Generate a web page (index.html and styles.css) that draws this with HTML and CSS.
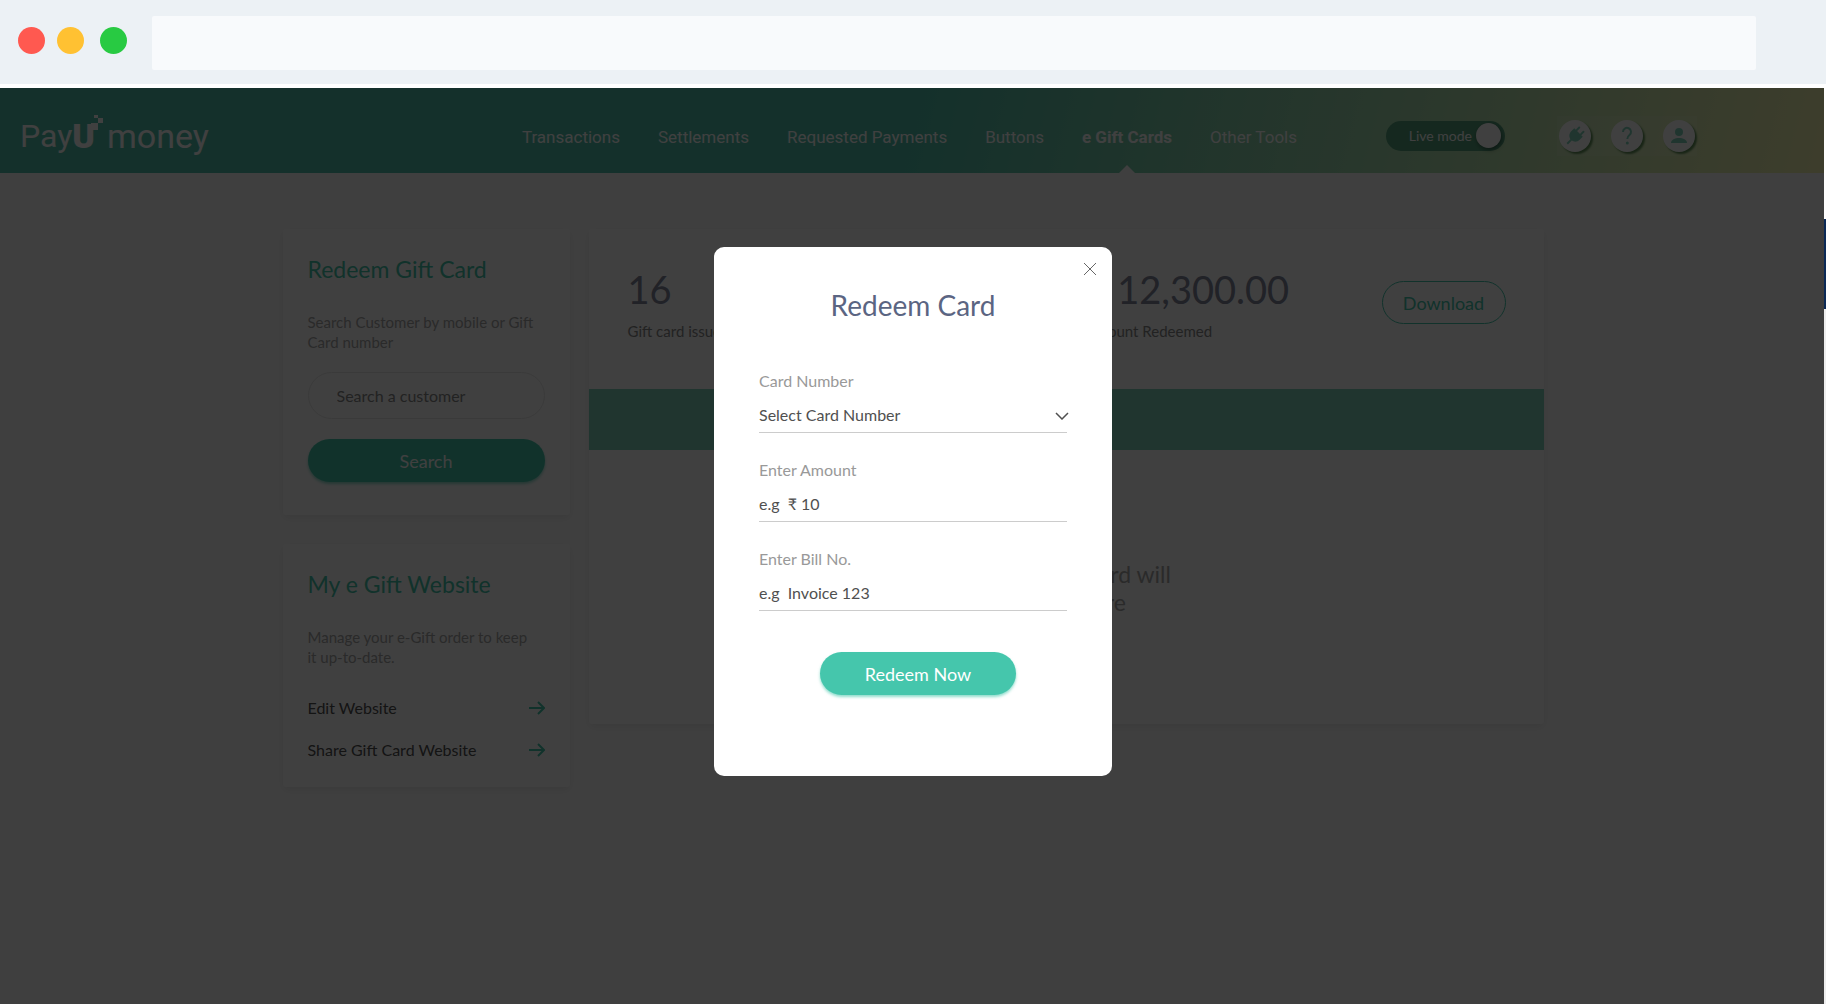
FILE: index.html
```html
<!DOCTYPE html>
<html lang="en">
<head>
    <meta charset="UTF-8">
    <meta name="viewport" content="width=device-width, initial-scale=1.0">
    <title>PayUmoney - e Gift Cards</title>
    <link rel="stylesheet" href="styles.css">
</head>
<body>
    <div class="browser-bar">
        <span class="dot red"></span>
        <span class="dot yellow"></span>
        <span class="dot green"></span>
        <input class="address" type="text" aria-label="Address">
    </div>

    <div class="page">
        <header class="header">
            <a class="logo" href="#" aria-label="PayUmoney">
                <span>Pay</span><span class="logo-u">U</span>
                <svg class="logo-bits" width="12" height="42" viewBox="0 0 12 42">
                    <rect x="3" y="0" width="4" height="3"/>
                    <rect x="7" y="3" width="5" height="5"/>
                    <rect x="0" y="8" width="7" height="7"/>
                </svg>
                <span class="logo-money">money</span>
            </a>
            <nav class="nav">
                <a href="#">Transactions</a>
                <a href="#">Settlements</a>
                <a href="#">Requested Payments</a>
                <a href="#">Buttons</a>
                <a href="#" class="active">e Gift Cards</a>
                <a href="#">Other Tools</a>
            </nav>
            <label class="mode">
                Live mode
                <input type="checkbox" checked>
                <span class="knob"></span>
            </label>
            <div class="tools">
                <button class="tool" aria-label="Integrations">
                    <svg width="20" height="20" viewBox="0 0 20 20">
                        <g transform="rotate(45 10 10)">
                            <rect x="6" y="0" width="2" height="6" rx="1"/>
                            <rect x="12" y="0" width="2" height="6" rx="1"/>
                            <path d="M4 5h12v4c0 4-2.500 6-5 6.500V21H9v-5.500C6.500 15 4 13 4 9z"/>
                        </g>
                    </svg>
                </button>
                <button class="tool" aria-label="Help">
                    <svg width="20" height="20" viewBox="0 0 20 20">
                        <path class="line" d="M6 6a4 4 0 1 1 6.500 3c-1.500 1.200-2.200 2-2.200 4"/>
                        <circle cx="10.300" cy="17" r="1.500"/>
                    </svg>
                </button>
                <button class="tool" aria-label="Account">
                    <svg width="20" height="20" viewBox="0 0 20 20">
                        <circle cx="10" cy="6" r="4"/>
                        <path d="M2 17c0-3.500 4-5 8-5s8 1.500 8 5z"/>
                    </svg>
                </button>
            </div>
        </header>

        <main class="content">
            <aside class="side">
                <section class="card">
                    <h2>Redeem Gift Card</h2>
                    <p>Search Customer by mobile or Gift Card number</p>
                    <input class="search-input" type="text" placeholder="Search a customer" aria-label="Search a customer">
                    <button class="btn">Search</button>
                </section>
                <section class="card website">
                    <h2>My e Gift Website</h2>
                    <p>Manage your e-Gift order to keep it up-to-date.</p>
                    <a class="site-link" href="#">
                        Edit Website
                        <svg width="16" height="14" viewBox="0 0 16 14"><path d="M0 7h15M9 1l6 6-6 6"/></svg>
                    </a>
                    <a class="site-link" href="#">
                        Share Gift Card Website
                        <svg width="16" height="14" viewBox="0 0 16 14"><path d="M0 7h15M9 1l6 6-6 6"/></svg>
                    </a>
                </section>
            </aside>
            <section class="card summary">
                <div class="stats">
                    <div class="stat">
                        <strong>16</strong>
                        <span>Gift card issued</span>
                    </div>
                    <div class="stat">
                        <strong>₹ 12,300.00</strong>
                        <span>Amount Redeemed</span>
                    </div>
                    <button class="download">Download</button>
                </div>
                <div class="band"></div>
                <p class="empty">Issued e gift card will<br>appear here</p>
            </section>
        </main>

        <div class="overlay">
            <form class="modal" role="dialog" aria-labelledby="modalTitle">
                <button class="close" type="button" aria-label="Close">
                    <svg width="14" height="14" viewBox="0 0 14 14"><path d="M1 1l12 12M13 1L1 13"/></svg>
                </button>
                <h1 id="modalTitle">Redeem Card</h1>
                <div class="field">
                    <label for="cardNumber">Card Number</label>
                    <select id="cardNumber">
                        <option>Select Card Number</option>
                    </select>
                    <svg class="chevron" width="14" height="8" viewBox="0 0 14 8"><path d="M1 1l6 6 6-6"/></svg>
                </div>
                <div class="field">
                    <label for="amount">Enter Amount</label>
                    <input type="text" id="amount" placeholder="e.g&nbsp; ₹ 10">
                </div>
                <div class="field">
                    <label for="bill">Enter Bill No.</label>
                    <input type="text" id="bill" placeholder="e.g&nbsp; Invoice 123">
                </div>
                <button class="btn redeem" type="submit">Redeem Now</button>
            </form>
        </div>
    </div>
    <div class="edge"></div>
</body>
</html>
```
FILE: styles.css
```css
* {
    box-sizing: border-box;
}
body {
    margin: 0;
    font-family: Lato, sans-serif;
    font-size: 16px;
    background: #fff;
    position: relative;
}
button, input, select {
    font-family: inherit;
    font-size: inherit;
}
a {
    text-decoration: none;
    color: inherit;
}

/* browser bar */
.browser-bar {
    display: flex;
    align-items: center;
    height: 84px;
    padding: 2px 70px 0 18px;
    background: #ecf1f5;
}
.dot {
    width: 27px;
    height: 27px;
    margin: 0 16px 6px 0;
    border-radius: 50%;
}
.red {
    background: #ff5950;
    margin-right: 12px;
}
.yellow {
    background: #ffc132;
}
.green {
    background: #28ca42;
    margin-right: 25px;
}
.address {
    flex: 1;
    height: 54px;
    border: none;
    border-radius: 2px;
    background: #f8fafc;
}

.page {
    position: relative;
    margin-top: 4px;
    min-height: calc(100vh - 88px);
    background: #fcfcfc;
}

/* sliver of the window behind */
.edge {
    position: absolute;
    right: 0;
    top: 84px;
    bottom: 0;
    width: 2px;
    background: linear-gradient(#fff 135px, #0c2a56 135px, #0c2a56 225px, #eee 225px);
}

/* header */
.header {
    display: flex;
    align-items: center;
    height: 85px;
    padding: 0 129px 0 20px;
    background: linear-gradient(105deg, #50c0ac 50%, #f4f4b0 100%);
}
.logo {
    display: flex;
    align-items: center;
    margin-right: auto;
    margin-top: 10px;
    font-family: Roboto, sans-serif;
    font-size: 32px;
    font-weight: 400;
    color: #fff;
}
.logo-u {
    font-size: 34px;
    font-weight: 900;
}
.logo-bits {
    fill: #fff;
    margin-left: -4px;
}
.logo-money {
    font-size: 34px;
    margin-left: 4px;
}
.nav {
    display: flex;
    gap: 38px;
    margin-right: 89px;
    font-family: Roboto, sans-serif;
    font-size: 17px;
    color: #fff;
}
.nav a {
    position: relative;
    line-height: 85px;
    padding-top: 7px;
    height: 85px;
}
.nav .active {
    font-weight: 700;
}
.nav .active::after {
    content: "";
    position: absolute;
    left: calc(50% - 8px);
    bottom: 0;
    border: 8px solid transparent;
    border-top: none;
    border-bottom-color: #fcfcfc;
}
.mode {
    display: flex;
    align-items: center;
    justify-content: flex-end;
    gap: 4px;
    width: 119px;
    height: 30px;
    padding-right: 4px;
    margin-right: 52px;
    border-radius: 15px;
    background: #54a07c;
    color: #fff;
    font-size: 14px;
    margin-top: 10px;
}
.mode input {
    position: absolute;
    opacity: 0;
}
.knob {
    width: 25px;
    height: 25px;
    border-radius: 50%;
    background: #fff;
    box-shadow: 1px 2px 4px rgba(0, 0, 0, 0.4);
}
.tools {
    display: flex;
    align-items: center;
    gap: 20px;
    height: 40px;
    padding: 0 2px;
    margin-top: 10px;
    background: rgba(255, 255, 255, 0.1);
}
.tool {
    display: flex;
    align-items: center;
    justify-content: center;
    width: 32px;
    height: 32px;
    padding: 0;
    border: none;
    border-radius: 50%;
    background: #fff;
    box-shadow: 2px 2px 2px #5f8f57;
}
.tool svg {
    fill: #80d4bc;
}
.tool .line {
    fill: none;
    stroke: #80d4bc;
    stroke-width: 2;
}

/* content */
.content {
    display: grid;
    grid-template-columns: 287px 1fr;
    align-items: start;
    gap: 19px;
    max-width: 1261px;
    margin: 0 auto;
    padding-top: 56px;
}
.side {
    display: grid;
    gap: 29px;
}
.card {
    padding: 25px;
    border-radius: 3px;
    background: #fff;
    box-shadow: 0 3px 8px rgba(0, 0, 0, 0.08);
}
.card h2 {
    margin: 0 0 28px;
    font-size: 23px;
    line-height: 30px;
    font-weight: 400;
    color: #45c6ac;
}
.card p {
    margin: 0 0 20px;
    padding-right: 8px;
    font-size: 15px;
    line-height: 20px;
    color: #a8a8a8;
}
.search-input {
    display: block;
    width: 100%;
    height: 47px;
    padding: 0 28px;
    margin-bottom: 20px;
    border: 1px solid #e8e8e8;
    border-radius: 24px;
    background: #fff;
}
.search-input::placeholder {
    color: #888;
}
.btn {
    display: block;
    width: 100%;
    height: 43px;
    border: none;
    border-radius: 22px;
    background: #45c6ac;
    color: #fff;
    font-size: 18px;
    box-shadow: 0 2px 3px rgba(69, 198, 172, 0.6);
}
.card > .btn {
    margin-bottom: 8px;
}
.website {
    padding-bottom: 16px;
}
.site-link {
    display: flex;
    justify-content: space-between;
    align-items: center;
    line-height: 42px;
    color: #505050;
}
.site-link svg {
    fill: none;
    stroke: #45c6ac;
    stroke-width: 2;
}
.summary {
    padding: 0;
    min-height: 495px;
}
.stats {
    display: grid;
    grid-template-columns: 458px 1fr auto;
    align-items: start;
    height: 160px;
    padding: 36px 38px 0 39px;
}
.stat {
    display: grid;
    gap: 6px;
    color: #888;
    font-size: 15px;
    line-height: 24px;
}
.stat strong {
    font-size: 38px;
    line-height: 48px;
    font-weight: 400;
    color: #82869c;
}
.download {
    width: 124px;
    height: 43px;
    margin-top: 16px;
    border: 1px solid #45c6ac;
    border-radius: 22px;
    background: #fff;
    color: #45c6ac;
    font-size: 18px;
}
.band {
    height: 61px;
    background: #80d4bc;
}
.summary .empty {
    margin: 110px 0 0;
    padding: 0;
    font-size: 23px;
    line-height: 28px;
    text-align: center;
}

/* redeem card popup */
.overlay {
    position: absolute;
    inset: 0;
    display: flex;
    align-items: flex-start;
    justify-content: center;
    padding-top: 159px;
    background: rgba(0, 0, 0, 0.75);
}
.modal {
    position: relative;
    width: 398px;
    padding: 40px 45px 81px;
    border-radius: 10px;
    background: #fff;
}
.modal h1 {
    margin: 0 0 48px;
    font-size: 28px;
    line-height: 36px;
    font-weight: 400;
    text-align: center;
    color: #5b6582;
}
.close {
    position: absolute;
    top: 15px;
    right: 15px;
    display: flex;
    padding: 0;
    border: none;
    background: none;
}
.close svg, .chevron {
    fill: none;
    stroke: #666;
}
.field {
    position: relative;
    margin-bottom: 27px;
}
.field label {
    display: block;
    line-height: 20px;
    color: #999;
}
.field input, .field select {
    width: 100%;
    height: 42px;
    padding: 5px 0 0;
    border: none;
    border-bottom: 1px solid #ccc;
    border-radius: 0;
    background: none;
    color: #505050;
    appearance: none;
}
.field input::placeholder {
    color: #505050;
}
.field .chevron {
    position: absolute;
    right: -2px;
    top: 41px;
    stroke: #505050;
    stroke-width: 1.5;
}
.redeem {
    width: 196px;
    margin: 41px 51px 0 auto;
}
```
